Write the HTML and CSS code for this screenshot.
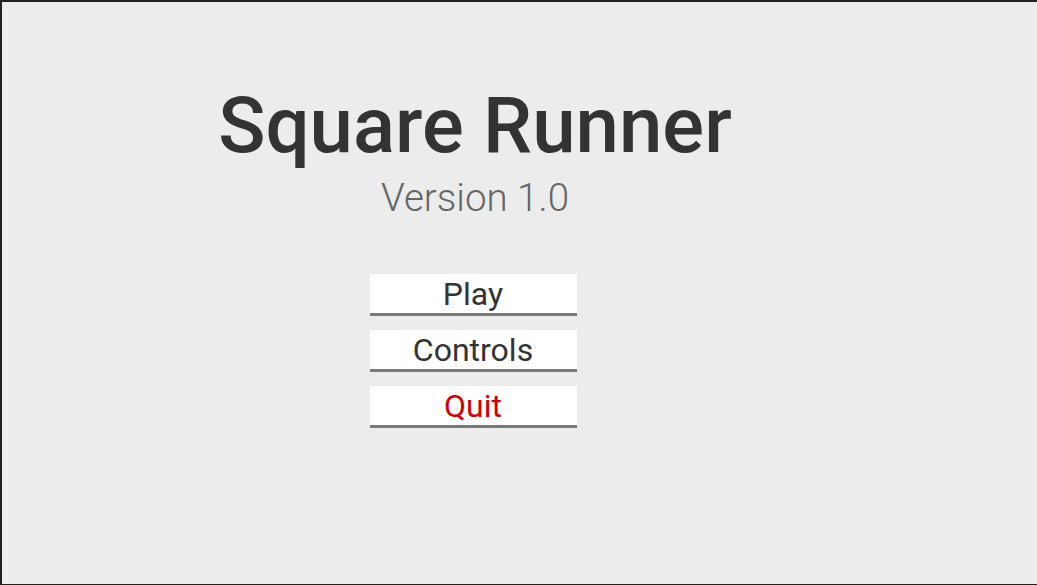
FILE: index.html
```html
<!DOCTYPE html>
<html>
<head>
<meta charset="utf-8">
<link rel="stylesheet" href="styles.css">
</head>
<body>
<div class="frame">
  <div class="menu">
    <h1 class="title">Square Runner</h1>
    <div class="version">Version 1.0</div>
    <div class="buttons">
      <div class="btn">Play</div>
      <div class="btn">Controls</div>
      <div class="btn quit">Quit</div>
    </div>
  </div>
</div>
</body>
</html>
```
FILE: styles.css
```css
html, body {
  margin: 0;
  padding: 0;
  width: 1037px;
  height: 585px;
  overflow: hidden;
}
.frame {
  box-sizing: border-box;
  width: 1037px;
  height: 585px;
  background: #ececec;
  border-top: 2px solid #222;
  border-left: 2px solid #222;
  border-bottom: 1px solid #222;
  font-family: Roboto, "Liberation Sans", sans-serif;
  color: #333;
}
.menu {
  width: 946px;
  display: flex;
  flex-direction: column;
  align-items: center;
  padding-top: 84px;
}
.title {
  margin: 0;
  font-size: 78px;
  line-height: 80px;
  font-weight: 500;
  color: #333;
}
.version {
  margin-top: 10px;
  font-size: 38.5px;
  line-height: 44px;
  font-weight: 300;
  color: #666;
}
.buttons {
  margin-top: 54px;
  margin-right: 4px;
  display: flex;
  flex-direction: column;
  gap: 14px;
}
.btn {
  box-sizing: border-box;
  width: 207px;
  height: 42px;
  background: #fff;
  border-bottom: 3px solid #777;
  text-align: center;
  font-size: 32px;
  line-height: 41px;
  color: #333;
}
.quit {
  color: #d00000;
}
```
